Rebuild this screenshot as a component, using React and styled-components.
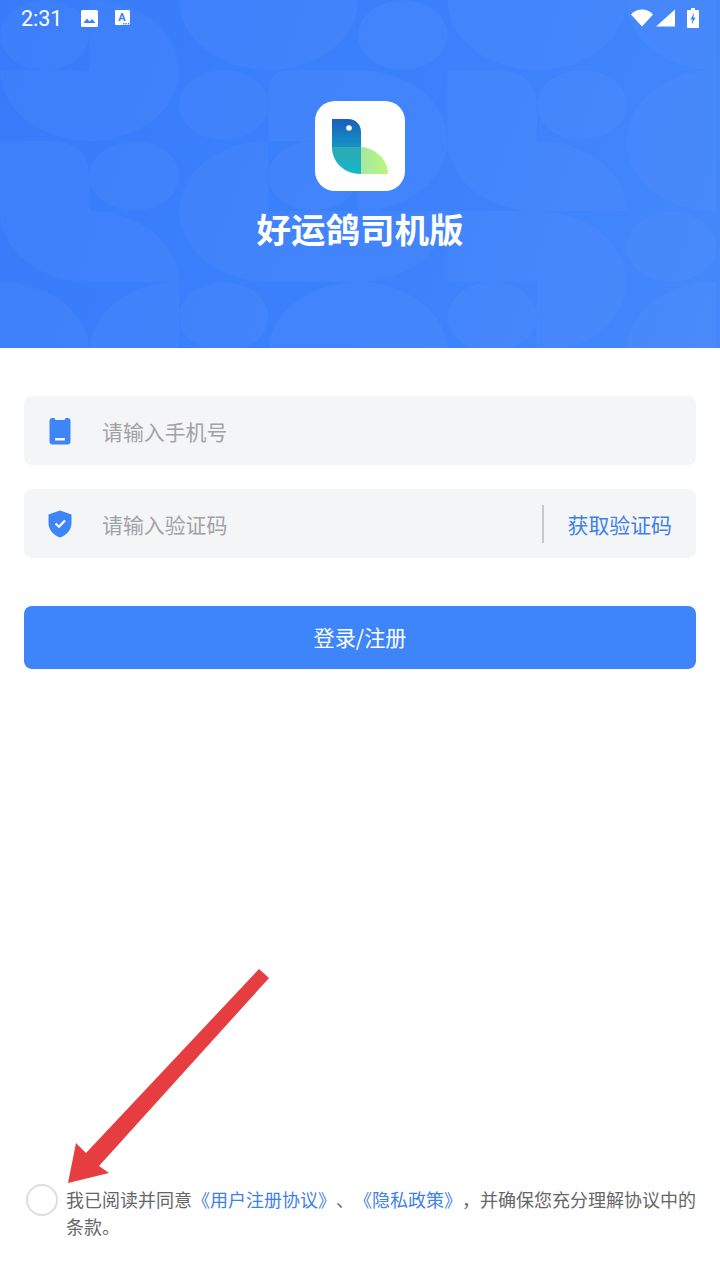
import React from "react";
import styled, { createGlobalStyle } from "styled-components";

const CJK = `"Noto Sans CJK SC", "Noto Sans", sans-serif`;

const GlobalStyle = createGlobalStyle`
  html, body {
    margin: 0;
    padding: 0;
    background: #ffffff;
    font-family: ${CJK};
    text-spacing-trim: space-all;
  }
`;

const Page = styled.div`
  position: relative;
  display: flex;
  flex-direction: column;
  width: 720px;
  height: 1280px;
  overflow: hidden;
  background: #ffffff;
`;

const Header = styled.header`
  position: relative;
  display: flex;
  flex-direction: column;
  align-items: center;
  height: 348px;
  background: linear-gradient(110deg, #377bfa 0%, #3b80fb 50%, #4488fb 100%);
`;

const Pattern = styled.svg`
  position: absolute;
  top: 0;
  left: 0;
`;

const StatusBar = styled.div`
  position: relative;
  display: flex;
  align-items: center;
  align-self: stretch;
  height: 36px;
  padding: 0 21px;
`;

const Time = styled.span`
  margin-right: 19px;
  font-family: Roboto, sans-serif;
  font-size: 21.5px;
  color: #ffffff;
`;

const StatusIcon = styled.svg`
  display: block;
  flex: none;
  margin-left: ${(props) => props.$gap || 0}px;
`;

const Spacer = styled.div`
  flex: 1;
`;

const LogoCard = styled.div`
  position: relative;
  width: 90px;
  height: 90px;
  margin-top: 65px;
  border-radius: 20px;
  background: #ffffff;
`;

const AppName = styled.h1`
  position: relative;
  margin: 14px 0 0;
  font-size: 34.5px;
  line-height: 46px;
  font-weight: 700;
  color: #ffffff;
`;

const Form = styled.div`
  display: flex;
  flex-direction: column;
  gap: 24px;
  padding: 48px 24px 0;
`;

const Field = styled.div`
  display: flex;
  align-items: center;
  height: 69px;
  padding-left: 24px;
  padding-right: 24px;
  border-radius: 8px;
  background: #f4f5f7;
`;

const FieldIcon = styled.svg`
  display: block;
  flex: none;
  width: 24px;
  margin-right: 30px;
`;

const Placeholder = styled.span`
  flex: 1;
  font-size: 20.9px;
  line-height: 28px;
  color: #a2a2a5;
`;

const Divider = styled.div`
  width: 2px;
  height: 38px;
  margin-right: 24px;
  background: #c9c9cb;
`;

const CodeLink = styled.span`
  font-size: 20.9px;
  line-height: 28px;
  color: #3f80e8;
`;

const SubmitButton = styled.button`
  height: 63px;
  margin-top: 24px;
  padding: 0 0 2px;
  border: 0;
  border-radius: 8px;
  background: #3e85f9;
  font-family: ${CJK};
  font-size: 21.2px;
  color: #ffffff;
`;

const Agreement = styled.div`
  display: flex;
  align-items: flex-start;
  margin-top: auto;
  padding: 0 22px 40px 26px;
`;

const Radio = styled.div`
  flex: none;
  box-sizing: border-box;
  width: 32px;
  height: 32px;
  margin: -2px 9px 0 0;
  border: 2.5px solid #dddddd;
  border-radius: 50%;
`;

const AgreementText = styled.p`
  margin: 0 0 0 -1px;
  font-size: 18px;
  line-height: 27px;
  color: #666666;
`;

const TermsLink = styled.span`
  color: #3f80e8;
`;

const Arrow = styled.svg`
  position: absolute;
  left: 60px;
  top: 960px;
`;

// three quarter blobs and half ellipses repeated over the banner
const SHAPES = [
  "M90 0A90 70 0 0 1 180 70A90 71 0 0 1 90 141A90 71 0 0 1 0 70H90Z",
  "M180 0A90 70 0 0 0 360 0Z",
  "M630 0A90 70 0 0 0 720 70V0Z",
  "M450 0A90 70 0 0 0 630 0Z",
  "M270 141V88Q270 70 295 70H360A90 71 0 0 1 450 141A90 70 0 0 1 360 211V141Z",
  "M270 141A90 70 0 0 0 180 211A90 71 0 0 0 270 282Z",
  "M270 211H450A90 71 0 0 1 360 282H270Z",
  "M0 141H50Q90 141 90 180V211A90 71 0 0 1 180 282H90A90 71 0 0 1 0 211Z",
  "M450 70H500Q540 70 540 109V141A90 70 0 0 1 630 211H540A90 70 0 0 1 450 141Z",
  "M450 211H540A90 71 0 0 1 630 282A90 70 0 0 1 540 352V282H450Z",
  "M0 282A90 70 0 0 1 90 352H0Z",
  "M90 352A90 70 0 0 1 180 282V352Z",
  "M270 352A90 70 0 0 1 450 352Z",
  "M630 352A90 70 0 0 1 720 282V352Z",
  "M720 70A90 71 0 0 0 630 141A90 70 0 0 0 720 211Z",
];

const DOTS = [
  [45, 35],
  [225, 105],
  [135, 176],
  [315, 176],
  [225, 317],
  [405, 35],
  [585, 105],
  [675, 247],
  [495, 317],
];

const BannerPattern = () => (
  <Pattern width="716" height="348" viewBox="0 0 720 348" preserveAspectRatio="none">
    {SHAPES.map((d) => (
      <path key={d} d={d} fill="#ffffff" fillOpacity="0.032" />
    ))}
    {DOTS.map(([cx, cy]) => (
      <ellipse key={cx + "-" + cy} cx={cx} cy={cy} rx="45" ry="35" fill="#ffffff" fillOpacity="0.032" />
    ))}
  </Pattern>
);

const BirdLogo = () => (
  <svg width="90" height="90" viewBox="0 0 90 90">
    <defs>
      <linearGradient id="bird-body" x1="0" y1="0" x2="0" y2="1">
        <stop offset="0" stopColor="#1a5fbb" />
        <stop offset="0.55" stopColor="#1497c6" />
        <stop offset="1" stopColor="#0fbcc6" />
      </linearGradient>
      <linearGradient id="bird-belly" x1="0" y1="0" x2="0" y2="1">
        <stop offset="0" stopColor="#6fe08a" stopOpacity="0.3" />
        <stop offset="1" stopColor="#6fe08a" stopOpacity="0" />
      </linearGradient>
      <linearGradient id="bird-wing" x1="0" y1="0" x2="1" y2="0">
        <stop offset="0" stopColor="#a5e8a2" />
        <stop offset="1" stopColor="#bcf77a" />
      </linearGradient>
    </defs>
    <path d="M17 18H33C41 18 46 24 46 31V73C29 73 17 61 17 46Z" fill="url(#bird-body)" />
    <path d="M17 46H46V73C29 73 17 61 17 46Z" fill="url(#bird-belly)" />
    <path d="M46 46C61 47 73 59 73 73H46Z" fill="url(#bird-wing)" />
    <circle cx="34" cy="27" r="2.8" fill="#ffffff" />
  </svg>
);

const App = () => {
  return (
    <Page>
      <GlobalStyle />
      <Header>
        <BannerPattern />
        <StatusBar>
          <Time>2:31</Time>
          <StatusIcon width="17" height="17" viewBox="0 0 17 17">
            <rect width="17" height="17" rx="1.5" fill="#ffffff" />
            <path d="M2.5 13L6 8.5L8.5 11.5L11 9L14.5 13Z" fill="#3b80fb" />
          </StatusIcon>
          <StatusIcon $gap="17" width="15" height="16" viewBox="0 0 15 16">
            <rect width="15" height="15" rx="1" fill="#ffffff" />
            <text x="7" y="10.5" textAnchor="middle" fontFamily="Roboto, sans-serif" fontSize="11" fontWeight="700" fill="#3b80fb">A</text>
            <path d="M8 13h1.4v1.4H8zM10.4 13h1.4v1.4h-1.4zM12.8 13h1.4v1.4h-1.4z" fill="#3b80fb" />
          </StatusIcon>
          <Spacer />
          <StatusIcon width="22" height="18" viewBox="0 0 22 18">
            <path d="M0 5.5C3 2.2 6.8 0.5 11 0.5S19 2.2 22 5.5L11 17.5Z" fill="#ffffff" />
          </StatusIcon>
          <StatusIcon $gap="3" width="19" height="18" viewBox="0 0 19 18">
            <path d="M0 17.5L19 0.5V17.5Z" fill="#ffffff" />
          </StatusIcon>
          <StatusIcon $gap="12" width="12" height="20" viewBox="0 0 12 20">
            <path d="M4 0H8V2H11C11.600 2 12 2.400 12 3V19C12 19.600 11.600 20 11 20H1C0.400 20 0 19.600 0 19V3C0 2.400 0.400 2 1 2H4Z" fill="#ffffff" />
            <path d="M7 4.500L3.500 11.500H5.500L4.800 16.500L8.500 9.500H6.300Z" fill="#3f85fb" />
          </StatusIcon>
        </StatusBar>
        <LogoCard>
          <BirdLogo />
        </LogoCard>
        <AppName>好运鸽司机版</AppName>
      </Header>

      <Form>
        <Field>
          <FieldIcon width="24" height="28" viewBox="0 0 24 28">
            <path d="M4.500 1H6.500L7.500 3H16.500L17.500 1H19.500C21 1 22.500 2.200 22.500 4V24.500C22.500 26.200 21.200 27.500 19.500 27.500H4.500C2.800 27.500 1.500 26.200 1.500 24.500V4C1.500 2.200 3 1 4.500 1Z" fill="#3e85f9" />
            <rect x="7" y="21" width="10" height="2.400" rx="0.500" fill="#f4f5f7" />
          </FieldIcon>
          <Placeholder>请输入手机号</Placeholder>
        </Field>
        <Field>
          <FieldIcon width="24" height="28" viewBox="0 0 24 28">
            <path d="M12 0.500L23.500 4.500V13C23.500 20 18.500 25 12 27.500C5.500 25 0.500 20 0.500 13V4.500Z" fill="#3e85f9" />
            <path d="M7.500 13.500L11 16.800L17 10.500" fill="none" stroke="#ffffff" strokeWidth="2.200" />
          </FieldIcon>
          <Placeholder>请输入验证码</Placeholder>
          <Divider />
          <CodeLink>获取验证码</CodeLink>
        </Field>
        <SubmitButton>登录/注册</SubmitButton>
      </Form>

      <Agreement>
        <Radio />
        <AgreementText>
          我已阅读并同意<TermsLink>《用户注册协议》</TermsLink>、<TermsLink>《隐私政策》</TermsLink>，并确保您充分理解协议中的条款。
        </AgreementText>
      </Agreement>

      <Arrow width="220" height="230" viewBox="60 960 220 230">
        <path d="M259 969L269 978L99 1166L109 1173L68 1183L76 1143L86 1153Z" fill="#e63e40" />
      </Arrow>
    </Page>
  );
};

export default App;
